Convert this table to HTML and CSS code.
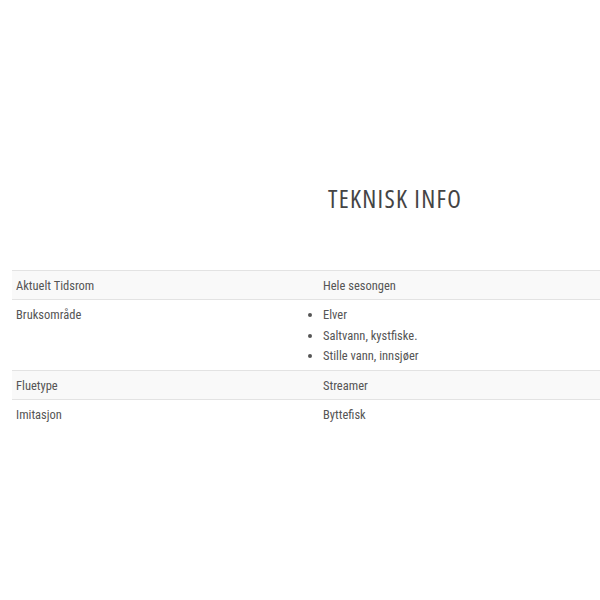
FILE: index.html
```html
<!DOCTYPE html>
<html lang="no">
<head>
<meta charset="utf-8">
<link rel="stylesheet" href="styles.css">
</head>
<body>
<section class="info">
  <h2 class="info-title">TEKNISK INFO</h2>
  <table class="specs">
    <tr class="odd">
      <th>Aktuelt Tidsrom</th>
      <td>Hele sesongen</td>
    </tr>
    <tr class="multi">
      <th>Bruksområde</th>
      <td>
        <ul>
          <li>Elver</li>
          <li>Saltvann, kystfiske.</li>
          <li>Stille vann, innsjøer</li>
        </ul>
      </td>
    </tr>
    <tr class="odd">
      <th>Fluetype</th>
      <td>Streamer</td>
    </tr>
    <tr>
      <th>Imitasjon</th>
      <td>Byttefisk</td>
    </tr>
  </table>
</section>
</body>
</html>
```
FILE: styles.css
```css
html, body {
  margin: 0;
  padding: 0;
  background: #fff;
}
body {
  font-family: Roboto, "Open Sans", sans-serif;
  font-stretch: 75%;
  color: #555;
}
.info {
  padding-top: 182px;
  padding-left: 12px;
}
.info-title {
  margin: 0 0 0 316px;
  font-family: "Open Sans", sans-serif;
  font-stretch: 75%;
  font-weight: 400;
  font-size: 25px;
  line-height: 32px;
  letter-spacing: 1.3px;
  color: #444;
}
.specs {
  margin-top: 56px;
  width: 100%;
  border-collapse: collapse;
  font-size: 12.5px;
}
.specs tr {
  border-top: 1px solid #e3e3e3;
}
.specs tr.odd {
  background: #f9f9f9;
}
.specs th, .specs td {
  text-align: left;
  font-weight: normal;
  vertical-align: top;
  padding: 7px 4px 6px;
  line-height: 15px;
}
.specs th {
  width: 299px;
}
.specs ul {
  margin: 0;
  padding-left: 0;
}
.specs li {
  line-height: 20.5px;
}
.specs .multi td {
  padding-top: 5px;
  padding-bottom: 3px;
}
```
